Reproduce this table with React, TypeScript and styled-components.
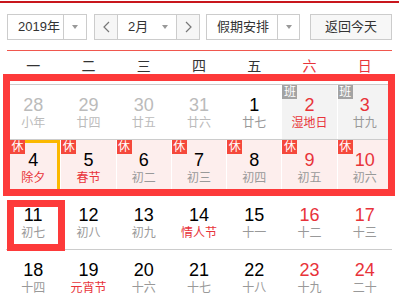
import React from 'react'
import styled, { createGlobalStyle } from 'styled-components'

type Tone = 'dim' | 'normal' | 'red'
type Day = {
  d: number
  l: string
  tone?: Tone
  fest?: boolean
  badge?: '休' | '班'
  bg?: 'gray' | 'pink'
  today?: boolean
}

const weekdays = ['一', '二', '三', '四', '五', '六', '日']

const weeks: Day[][] = [
  [
    { d: 28, l: '小年', tone: 'dim' },
    { d: 29, l: '廿四', tone: 'dim' },
    { d: 30, l: '廿五', tone: 'dim' },
    { d: 31, l: '廿六', tone: 'dim' },
    { d: 1, l: '廿七' },
    { d: 2, l: '湿地日', tone: 'red', fest: true, badge: '班', bg: 'gray' },
    { d: 3, l: '廿九', tone: 'red', badge: '班', bg: 'gray' },
  ],
  [
    { d: 4, l: '除夕', fest: true, badge: '休', bg: 'pink', today: true },
    { d: 5, l: '春节', fest: true, badge: '休', bg: 'pink' },
    { d: 6, l: '初二', badge: '休', bg: 'pink' },
    { d: 7, l: '初三', badge: '休', bg: 'pink' },
    { d: 8, l: '初四', badge: '休', bg: 'pink' },
    { d: 9, l: '初五', tone: 'red', badge: '休', bg: 'pink' },
    { d: 10, l: '初六', tone: 'red', badge: '休', bg: 'pink' },
  ],
  [
    { d: 11, l: '初七' },
    { d: 12, l: '初八' },
    { d: 13, l: '初九' },
    { d: 14, l: '情人节', fest: true },
    { d: 15, l: '十一' },
    { d: 16, l: '十二', tone: 'red' },
    { d: 17, l: '十三', tone: 'red' },
  ],
  [
    { d: 18, l: '十四' },
    { d: 19, l: '元宵节', fest: true },
    { d: 20, l: '十六' },
    { d: 21, l: '十七' },
    { d: 22, l: '十八' },
    { d: 23, l: '十九', tone: 'red' },
    { d: 24, l: '二十', tone: 'red' },
  ],
]

const numColor = { dim: '#bbb', normal: '#000', red: '#e8333a' }

const App = () => (
  <>
    <GlobalStyle />
    <TopBar />
    <Page>
      <Toolbar>
        <Select $w={80}>
          <SelectText $w={55}>2019年</SelectText>
          <Caret $divider />
        </Select>
        <MonthGroup>
          <NavBtn $side='left'>
            <svg width='7' height='12' viewBox='0 0 7 12'>
              <polyline points='6,1 1,6 6,11' fill='none' stroke='#777' strokeWidth='1.2' />
            </svg>
          </NavBtn>
          <SelectText $w={36}>2月</SelectText>
          <Caret />
          <NavBtn $side='right'>
            <svg width='7' height='12' viewBox='0 0 7 12'>
              <polyline points='1,1 6,6 1,11' fill='none' stroke='#777' strokeWidth='1.2' />
            </svg>
          </NavBtn>
        </MonthGroup>
        <Select $w={94}>
          <SelectText $w={70}>假期安排</SelectText>
          <Caret $divider />
        </Select>
        <TodayBtn>返回今天</TodayBtn>
      </Toolbar>
      <Rule />
      <WeekHead>
        {weekdays.map((w, i) => (
          <WeekDay key={w} $weekend={i > 4}>
            {w}
          </WeekDay>
        ))}
      </WeekHead>
      <Body>
        {weeks.map((week, wi) => (
          <Row key={wi}>
            {week.map(day => (
              <Cell key={day.d} $bg={day.bg} $today={day.today}>
                {day.badge && (
                  <Badge $kind={day.badge} $inset={day.today}>
                    {day.badge}
                  </Badge>
                )}
                <Num $tone={day.tone || 'normal'}>{day.d}</Num>
                <Lunar $dim={day.tone === 'dim'} $fest={day.fest}>
                  {day.l}
                </Lunar>
              </Cell>
            ))}
          </Row>
        ))}
        <WeekMark />
        <DayMark />
      </Body>
    </Page>
  </>
)

const GlobalStyle = createGlobalStyle`
  html, body {
    margin: 0;
    padding: 0;
    overflow: hidden;
    background: #fff;
  }
  body {
    font-family: "Liberation Sans", "Noto Sans CJK SC", sans-serif;
  }
`

const TopBar = styled.div`
  margin-top: 1px;
  height: 2px;
  background: #c8161d;
`

const Page = styled.div`
  width: 386px;
  margin-left: 6px;
`

const Toolbar = styled.div`
  display: flex;
  align-items: center;
  margin: 11px 0 0 1px;
  height: 26px;
  font-size: 13px;
  color: #333;
`

const Select = styled.div<{ $w: number }>`
  display: flex;
  width: ${p => p.$w}px;
  height: 26px;
  box-sizing: border-box;
  border: 1px solid #ccc;
  background: #fff;
  & + & {
    margin-left: 6px;
  }
`

const SelectText = styled.span<{ $w: number }>`
  width: ${p => p.$w}px;
  box-sizing: border-box;
  padding-left: 10px;
  line-height: 24px;
  white-space: nowrap;
`

const Caret = styled.span<{ $divider?: boolean }>`
  flex: 1;
  display: flex;
  align-items: center;
  justify-content: center;
  border-left: ${p => (p.$divider ? '1px solid #ccc' : 'none')};
  &::after {
    content: '';
    border-left: 3.5px solid transparent;
    border-right: 3.5px solid transparent;
    border-top: 4px solid #999;
  }
`

const MonthGroup = styled.div`
  display: flex;
  width: 106px;
  height: 26px;
  margin: 0 6px 0 7px;
  box-sizing: border-box;
  border: 1px solid #ccc;
`

const NavBtn = styled.span<{ $side: 'left' | 'right' }>`
  width: 22px;
  display: flex;
  align-items: center;
  justify-content: center;
  background: #f6f6f6;
  border-${p => (p.$side === 'left' ? 'right' : 'left')}: 1px solid #ccc;
`

const TodayBtn = styled.div`
  width: 82px;
  height: 26px;
  margin-left: 10px;
  box-sizing: border-box;
  border: 1px solid #ccc;
  background: #f7f7f7;
  text-align: center;
  line-height: 24px;
`

const Rule = styled.div`
  height: 1px;
  margin: 10px 0 0 1px;
  background: #f0574e;
`

const WeekHead = styled.div`
  display: grid;
  grid-template-columns: repeat(7, 1fr);
  column-gap: 1px;
  height: 33px;
  line-height: 31px;
  font-size: 14px;
`

const WeekDay = styled.div<{ $weekend: boolean }>`
  text-align: center;
  color: ${p => (p.$weekend ? '#e8333a' : '#333')};
`

const Body = styled.div`
  position: relative;
`

const Row = styled.div`
  display: grid;
  grid-template-columns: repeat(7, 1fr);
  column-gap: 1px;
  height: 55px;
  box-sizing: border-box;
  border-top: 1px solid #ccc;
  background: #fff;
`

const Cell = styled.div<{ $bg?: 'gray' | 'pink'; $today?: boolean }>`
  position: relative;
  display: flex;
  flex-direction: column;
  align-items: center;
  padding-top: 10px;
  background: ${p => (p.$bg === 'gray' ? '#f3f3f3' : p.$bg === 'pink' ? '#fdeeed' : '#fff')};
  box-shadow: ${p => (p.$today ? 'inset 0 0 0 3px #fbb800' : 'none')};
`

const Badge = styled.span<{ $kind: '休' | '班'; $inset?: boolean }>`
  position: absolute;
  top: 0;
  left: ${p => (p.$inset ? 4 : 0)}px;
  width: 15px;
  height: 14px;
  line-height: 14px;
  text-align: center;
  font-size: 12px;
  color: #fff;
  background: ${p => (p.$kind === '休' ? '#f5483b' : '#a3a3a3')};
`

const Num = styled.div<{ $tone: Tone }>`
  font-size: 18px;
  line-height: 20px;
  color: ${p => numColor[p.$tone]};
`

const Lunar = styled.div<{ $dim?: boolean; $fest?: boolean }>`
  font-size: 12px;
  line-height: 16px;
  white-space: nowrap;
  color: ${p => (p.$fest ? '#e8333a' : p.$dim ? '#bbb' : '#999')};
`

const Mark = styled.div`
  position: absolute;
  box-sizing: border-box;
  border: 7px solid #fd3a3a;
  pointer-events: none;
`

const WeekMark = styled(Mark)`
  left: -3px;
  top: -10px;
  width: 392px;
  height: 122px;
`

const DayMark = styled(Mark)`
  left: 1px;
  top: 116px;
  width: 58px;
  height: 51px;
`

export default App
